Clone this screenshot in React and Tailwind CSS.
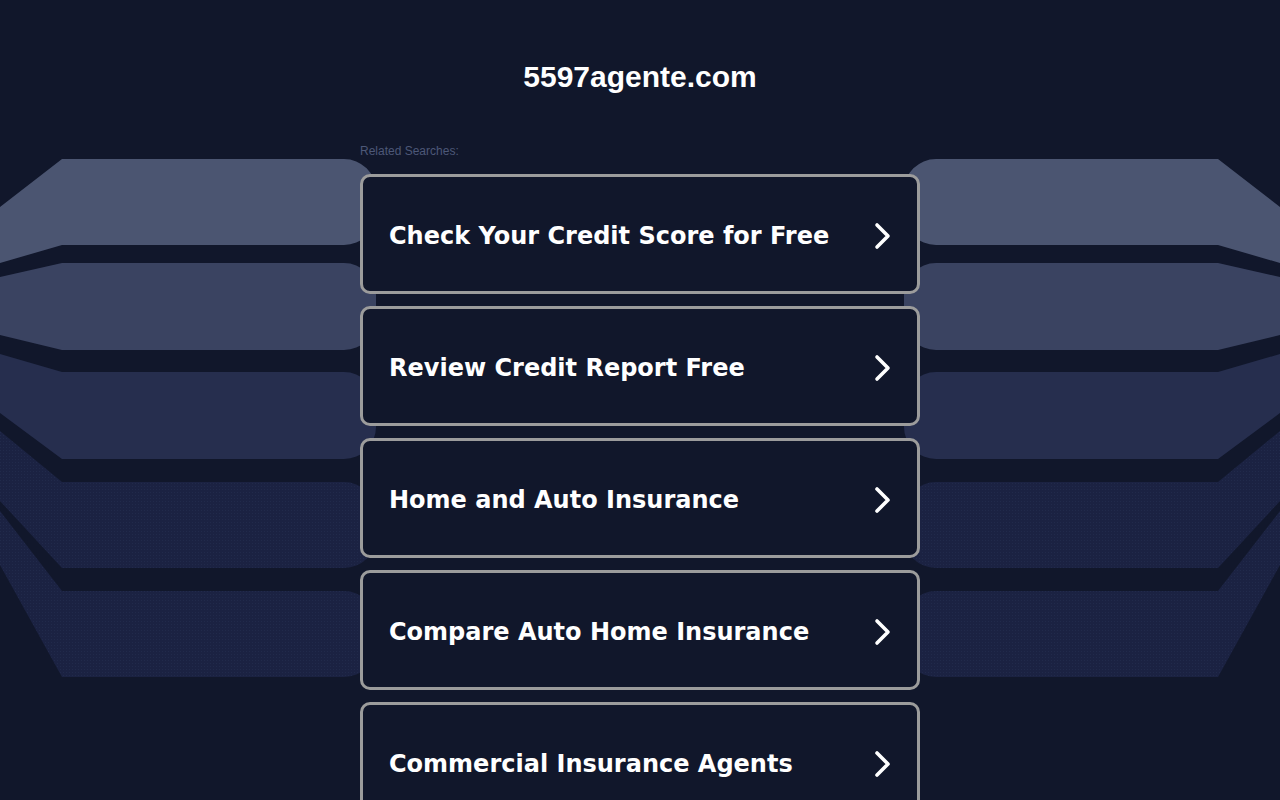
import React from "react";

const searches = [
  "Check Your Credit Score for Free",
  "Review Credit Report Free",
  "Home and Auto Insurance",
  "Compare Auto Home Insurance",
  "Commercial Insurance Agents",
];

// band geometry: y at x=0 (top), top, bottom, y at x=0 (bottom)
const bands = [
  { tl: 207, top: 159, bottom: 245, bl: 263, fill: "#4b5571" },
  { tl: 277, top: 263, bottom: 350, bl: 335, fill: "#3a4361" },
  { tl: 354, top: 372, bottom: 459, bl: 413, fill: "#262e4e" },
  { tl: 431, top: 482, bottom: 568, bl: 501, fill: "url(#dots)" },
  { tl: 511, top: 591, bottom: 677, bl: 565, fill: "url(#dots)" },
];

const bandPath = (b) => {
  const end = 376;
  const r = 32;
  return `M0 ${b.tl} L62 ${b.top} L${end - r} ${b.top} A${r} ${r} 0 0 1 ${end} ${b.top + r} L${end} ${b.bottom - r} A${r} ${r} 0 0 1 ${end - r} ${b.bottom} L62 ${b.bottom} L0 ${b.bl} Z`;
};

function Bands({ className }) {
  return (
    <svg className={className} width="380" height="800" viewBox="0 0 380 800">
      <defs>
        <pattern id="dots" width="3" height="3" patternUnits="userSpaceOnUse">
          <rect width="3" height="3" fill="#1b2242" />
          <rect width="1" height="1" fill="#212a4b" />
        </pattern>
      </defs>
      {bands.map((b, i) => (
        <path key={i} d={bandPath(b)} fill={b.fill} />
      ))}
    </svg>
  );
}

function Chevron() {
  return (
    <svg width="18" height="28" viewBox="0 0 18 28" className="shrink-0">
      <polyline
        points="4,3 15,14 4,25"
        fill="none"
        stroke="#ffffff"
        strokeWidth="3.6"
        strokeLinecap="round"
        strokeLinejoin="round"
      />
    </svg>
  );
}

export default function App() {
  return (
    <div className="relative w-full h-[800px] overflow-hidden bg-[#11172b]">
      <Bands className="absolute left-0 top-0" />
      <Bands className="absolute right-0 top-0 -scale-x-100" />

      <div className="relative flex flex-col items-center">
        <h1
          className="mt-[59px] text-[30px] leading-[36px] font-bold text-white"
          style={{ fontFamily: '"Liberation Sans", Arial, sans-serif' }}
        >
          5597agente.com
        </h1>

        <div className="w-[560px] mt-[49px]">
          <p
            className="text-[12px] leading-[14px] text-[#4d5878]"
            style={{ fontFamily: '"Liberation Sans", Arial, sans-serif' }}
          >
            Related Searches:
          </p>
          <div className="mt-[16px] flex flex-col gap-3">
            {searches.map((s) => (
              <a
                key={s}
                href="#"
                className="h-[120px] flex items-center justify-between pt-[4px] pl-[26px] pr-[26px] bg-[#11172b] border-[3px] border-[#9c9c9c] rounded-[10px]"
              >
                <span
                  className="text-[24px] font-bold text-white"
                  style={{ fontFamily: '"DejaVu Sans", Verdana, sans-serif' }}
                >
                  {s}
                </span>
                <Chevron />
              </a>
            ))}
          </div>
        </div>
      </div>
    </div>
  );
}
